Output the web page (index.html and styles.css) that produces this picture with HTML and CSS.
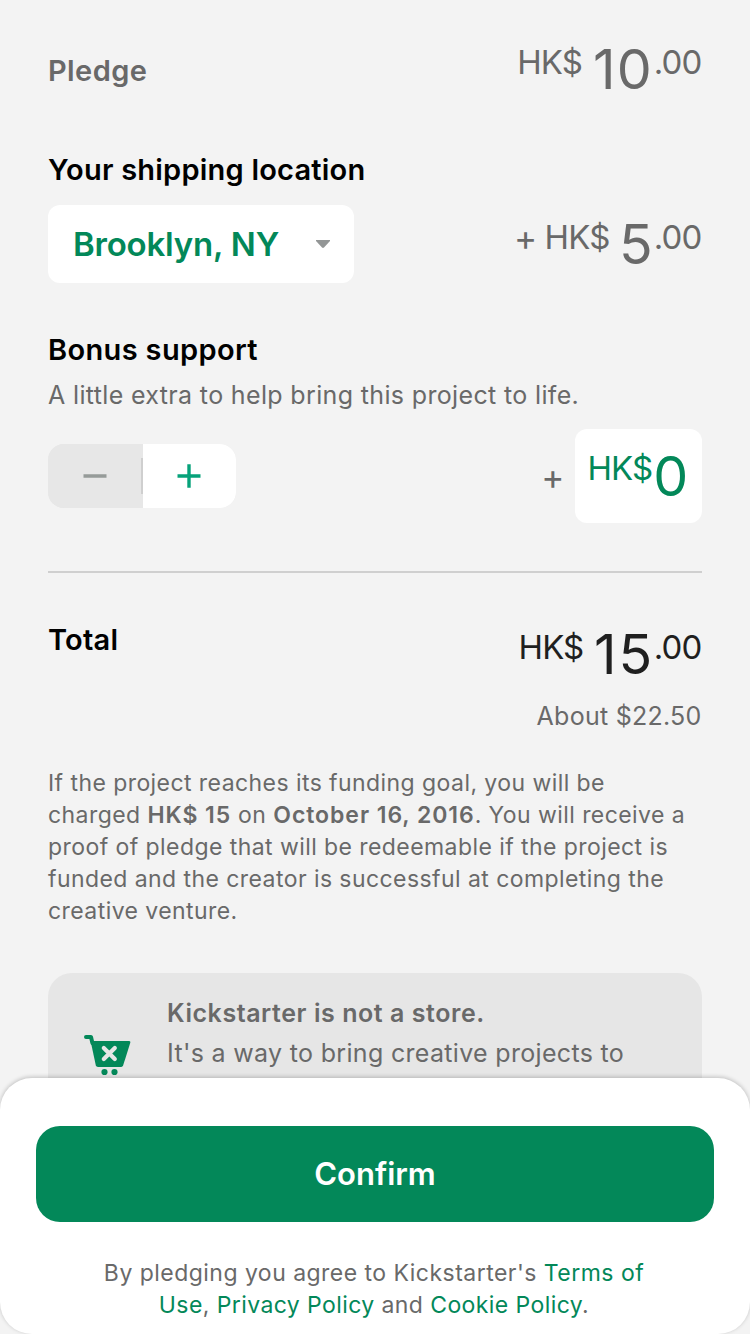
FILE: index.html
```html
<!DOCTYPE html>
<html lang="en">
<head>
<meta charset="utf-8">
<title>Pledge</title>
<link rel="stylesheet" href="styles.css">
</head>
<body>
<div class="screen">
  <main class="content">
    <section class="row row-pledge">
      <h2 class="heading heading-muted">Pledge</h2>
      <div class="amount"><span class="currency">HK$</span><span class="whole whole-ten">10</span><span class="cents">.00</span></div>
    </section>
    <section class="shipping">
      <h2 class="heading heading-shipping">Your shipping location</h2>
      <div class="row row-shipping">
        <button class="select"><span>Brooklyn, NY</span><svg class="caret" width="14" height="8" viewBox="0 0 14 8"><path d="M0 0H14V1L8 7.6Q7 8.4 6 7.6L0 1Z" fill="#939696"/></svg></button>
        <div class="amount amount-shipping"><span class="plus">+</span><span class="currency">HK$</span><span class="whole whole-five">5</span><span class="cents">.00</span></div>
      </div>
    </section>
    <section class="bonus">
      <h2 class="heading heading-bonus">Bonus support</h2>
      <p class="hint">A little extra to help bring this project to life.</p>
      <div class="row row-bonus">
        <div class="stepper">
          <button class="step step-minus"><svg width="24" height="24" viewBox="0 0 24 24"><path d="M0.5 12H23.5" stroke="#969b99" stroke-width="3.4"/></svg></button>
          <span class="step-divider"></span>
          <button class="step step-plus"><svg width="24" height="24" viewBox="0 0 24 24"><path d="M0.5 12H23.5M12 0.2V23.8" stroke="#06a27a" stroke-width="3.4"/></svg></button>
        </div>
        <div class="bonus-entry"><span class="plus">+</span><div class="bonus-field"><span class="currency">HK$</span><span class="whole">0</span></div></div>
      </div>
    </section>
    <section class="total">
      <h2 class="heading heading-total">Total</h2>
      <div class="total-values">
        <div class="amount amount-total"><span class="currency">HK$</span><span class="whole whole-fifteen">15</span><span class="cents">.00</span></div>
        <p class="about">About $22.50</p>
      </div>
    </section>
    <p class="terms">If the project reaches its funding goal, you will be<br><span class="charge-line">charged <b>HK$ 15</b> on <b>October 16, 2016</b>. You will receive a</span><br>proof of pledge that will be redeemable if the project is<br>funded and the creator is successful at completing the<br>creative venture.</p>
    <aside class="notice">
      <svg class="cart" width="48" height="42" viewBox="0 0 48 42">
        <path d="M2 2H7L8.4 8" fill="none" stroke="#038859" stroke-width="4" stroke-linecap="round" stroke-linejoin="round"/>
        <path d="M6.6 6H45.2Q46.8 6 46.3 7.8L39.2 30.3Q38.6 32 37.2 32H14Q12.2 32 11.8 30.3Z" fill="#038859"/>
        <path d="M19.8 12.9L30.8 23.9M30.8 12.9L19.8 23.9" stroke="#e6e6e6" stroke-width="4.2" stroke-linecap="round"/>
        <circle cx="20.5" cy="37" r="3.1" fill="#038859"/><circle cx="30.5" cy="37" r="3.1" fill="#038859"/>
      </svg>
      <div class="notice-text"><strong>Kickstarter is not a store.</strong><p>It's a way to bring creative projects to</p></div>
    </aside>
  </main>
  <footer class="sheet">
    <button class="confirm">Confirm</button>
    <p class="legal">By pledging you agree to Kickstarter's <a>Terms of</a><br><span class="policies"><a>Use</a>, <a>Privacy Policy</a> and <a>Cookie Policy</a>.</span></p>
  </footer>
</div>
</body>
</html>
```
FILE: styles.css
```css
* { box-sizing: border-box; }
body, h2, p { margin: 0; }
body { background: #f3f3f3; font-family: Inter, "Noto Sans", sans-serif; color: #696969; }
button { border: 0; padding: 0; font: inherit; }
.screen { height: 1334px; overflow: hidden; display: flex; flex-direction: column; background: #f3f3f3; }
.content { flex: none; height: 1078px; padding: 44px 48px 0; overflow: hidden; }
.row { display: flex; justify-content: space-between; align-items: flex-start; }
.heading { font-size: 29px; line-height: 36px; font-weight: 600; letter-spacing: .22px; color: #000; white-space: nowrap; }
.heading-muted { color: #696969; margin-top: 9px; letter-spacing: .4px; }
.row-pledge { height: 108px; }
.amount { display: flex; align-items: flex-start; white-space: nowrap; color: #696969; }
.currency, .cents { font-size: 33px; line-height: 37px; letter-spacing: -.9px; }
.cents { margin: 0 .7px 0 1px; }
.whole { font-size: 55.5px; line-height: 50px; letter-spacing: .5px; }
.whole-ten { margin-left: 11px; letter-spacing: 1px; }
.whole-five { margin-left: 9.5px; letter-spacing: 0; }
.whole-fifteen { margin-left: 10.5px; letter-spacing: 2px; }
.whole-fifteen + .cents { margin-left: -.5px; }
.plus { font-size: 35px; line-height: 37px; }
.amount .plus { margin-right: 7.5px; }
.select { width: 306px; height: 78px; margin-top: 17px; padding: 0 24px 0 25px; border-radius: 12px; background: #fff; color: #038859; font-size: 33px; font-weight: 600; letter-spacing: -.2px; display: flex; align-items: center; justify-content: space-between; white-space: nowrap; }
.amount-shipping { margin-top: 31px; }
.bonus { height: 241px; margin-top: 49px; border-bottom: 2px solid #cfcfcf; }
.heading-bonus { letter-spacing: .35px; }
.hint { font-size: 25px; line-height: 32px; letter-spacing: .35px; margin-top: 11px; white-space: nowrap; }
.row-bonus { margin-top: 18px; }
.stepper { display: flex; align-items: center; width: 188px; height: 64px; margin-top: 15px; border-radius: 16px; overflow: hidden; background: #e7e7e7; }
.step { height: 64px; display: flex; align-items: center; justify-content: center; }
.step-minus { width: 93px; background: #e7e7e7; }
.step-divider { width: 2px; height: 36px; background: #cfcfcf; }
.step-plus { width: 93px; padding-right: 1px; background: #fff; }
.bonus-entry { display: flex; align-items: flex-start; }
.bonus-entry .plus { margin: 29px 10.5px 0 0; }
.bonus-field { width: 127px; height: 94px; padding: 21px 0 0 12.5px; border-radius: 12px; background: #fff; color: #038859; display: flex; align-items: flex-start; }
.bonus-field .whole { margin: 1px 0 0 1px; }
.total { display: flex; justify-content: space-between; padding-top: 49px; height: 194px; }
.total-values { display: flex; flex-direction: column; align-items: flex-end; padding-top: 7px; }
.amount-total { color: #1f1f1f; }
.about { font-size: 25px; line-height: 32px; letter-spacing: .25px; margin: 21px .5px 0 0; }
.terms { font-size: 23px; line-height: 32px; letter-spacing: .43px; white-space: nowrap; }
.terms b { font-weight: 600; letter-spacing: .95px; }
.charge-line { letter-spacing: .43px; }
.notice { margin-top: 46px; height: 200px; border-radius: 24px; background: #e6e6e6; padding: 20px 24px 0 36px; display: flex; }
.cart { margin-top: 42px; flex: none; }
.notice-text { margin-left: 35px; font-size: 25px; line-height: 40px; letter-spacing: .32px; white-space: nowrap; }
.notice-text strong { font-weight: 600; letter-spacing: .56px; }
.sheet { position: relative; flex: none; height: 256px; border-radius: 32px; background: #fff; box-shadow: 0 -1px 4px rgba(0,0,0,.22); padding: 48px 36px 0; text-align: center; }
.confirm { display: block; width: 100%; height: 96px; padding-bottom: 2px; border-radius: 24px; background: #038859; color: #fff; font-size: 31px; font-weight: 600; }
.legal { font-size: 23px; line-height: 32px; letter-spacing: .47px; margin: 35px 2px 0 0; white-space: nowrap; }
.legal a { color: #038859; }
.policies { letter-spacing: .41px; }
```
